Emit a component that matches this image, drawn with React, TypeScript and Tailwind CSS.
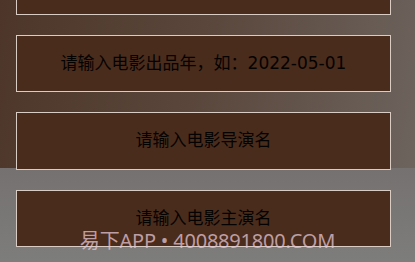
const fields = [
  '请输入电影名称',
  '请输入电影出品年，如：2022-05-01',
  '请输入电影导演名',
  '请输入电影主演名',
]

export default function App() {
  return (
    <div
      className="relative h-[262px] w-[415px] overflow-hidden bg-[linear-gradient(to_bottom,transparent_0,transparent_168px,#757170_168px,#7d7d7c_262px),linear-gradient(100deg,#4d3629_0%,#5a463b_45%,#6e6660_100%)] font-['Noto_Sans','Noto_Sans_CJK_SC',sans-serif]"
    >
      <div className="-mt-[43px] flex flex-col gap-[20px] pl-[16px]">
        {fields.map((label) => (
          <div
            key={label}
            className="flex h-[57.5px] w-[375px] items-center justify-center border-[1.5px] border-[#d8ccc4] bg-[#4a2c1c] font-['DejaVu_Sans','Noto_Sans_CJK_SC',sans-serif] text-[17px] text-[#050302]"
          >
            {label}
          </div>
        ))}
      </div>

      {/* watermark */}
      <div className="pointer-events-none absolute left-0 right-0 top-[226px] text-center text-[20px] tracking-[-0.2px] text-[#e3c6d4]/75">
        易下APP • 4008891800.COM
      </div>
    </div>
  )
}
